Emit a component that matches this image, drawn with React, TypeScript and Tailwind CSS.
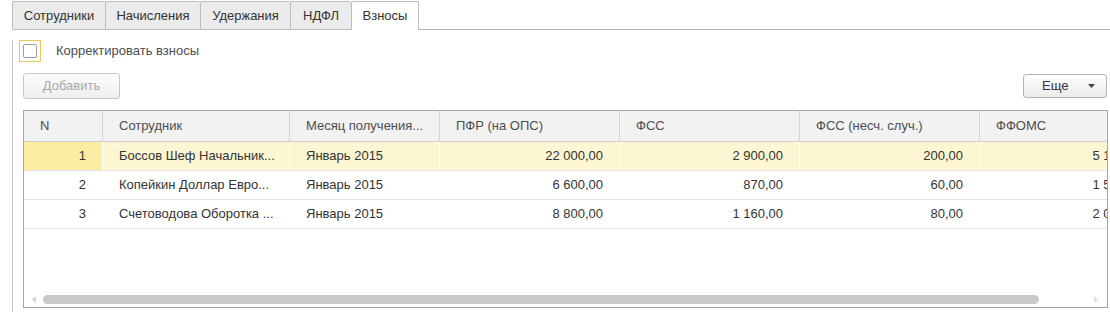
import React from "react";

const cols = [
  { w: 79, title: "N", align: "right" },
  { w: 187, title: "Сотрудник", align: "left" },
  { w: 150, title: "Месяц получения...", align: "left" },
  { w: 180, title: "ПФР (на ОПС)", align: "right" },
  { w: 180, title: "ФСС", align: "right" },
  { w: 180, title: "ФСС (несч. случ.)", align: "right" },
  { w: 180, title: "ФФОМС", align: "right" },
];

const rows = [
  ["1", "Боссов Шеф Начальник...", "Январь 2015", "22 000,00", "2 900,00", "200,00", "5 100,00"],
  ["2", "Копейкин Доллар Евро...", "Январь 2015", "6 600,00", "870,00", "60,00", "1 530,00"],
  ["3", "Счетоводова Оборотка ...", "Январь 2015", "8 800,00", "1 160,00", "80,00", "2 040,00"],
];

const tabs = [
  { t: "Сотрудники", w: 93 },
  { t: "Начисления", w: 95 },
  { t: "Удержания", w: 90 },
  { t: "НДФЛ", w: 61 },
];

export default function App() {
  return (
    <div
      className="w-[1110px] h-[312px] bg-white overflow-hidden text-[13px] text-[#333]"
      style={{ fontFamily: '"Liberation Sans", Arial, sans-serif' }}
    >
      {/* Tabs */}
      <div className="flex pt-[1px] pl-[12px] h-[30px]">
        {tabs.map((tab) => (
          <div
            key={tab.t}
            className="h-[29px] flex items-center justify-center bg-[#ebebeb] border-l border-t border-b border-[#bdbdbd] rounded-t-[2px] shrink-0"
            style={{ width: tab.w }}
          >
            {tab.t}
          </div>
        ))}
        <div className="h-[29px] w-[68px] flex items-center justify-center bg-white border-l border-r border-t border-[#bdbdbd] rounded-t-[2px] shrink-0">
          Взносы
        </div>
        <div className="flex-1 h-[29px] border-b border-[#b4b4b4]" />
      </div>

      {/* Panel */}
      <div className="ml-[12px] border-l border-[#c6c6c6] h-[282px]">
        {/* Checkbox row */}
        <div className="flex items-center mt-[10px] h-[22px]">
          <div className="ml-[6px] w-[22px] h-[22px] border border-[#f0c658] flex items-center justify-center">
            <div className="w-[14px] h-[14px] border border-[#9c9c9c] rounded-[2px] bg-white" />
          </div>
          <span className="ml-[15px] text-[#4d4d4d]">Корректировать взносы</span>
        </div>

        {/* Buttons */}
        <div className="ml-[10px] w-[1085px] mt-[11px] flex items-center justify-between h-[26px]">
          <div className="w-[97px] h-[26px] rounded-[3px] border border-[#c8c8c8] bg-gradient-to-b from-[#fdfdfd] to-[#eeeeee] flex items-center justify-center text-[#a8a8a8]">
            Добавить
          </div>
          <div className="mr-[1px] w-[84px] h-[24px] rounded-[3px] border border-[#b5b5b5] bg-gradient-to-b from-[#ffffff] to-[#ebebeb] flex items-center pl-[18px] pr-[11px] justify-between text-[#333]">
            <span>Еще</span>
            <svg width="7" height="4" viewBox="0 0 7 4">
              <path d="M0 0 L7 0 L3.5 4 Z" fill="#444" />
            </svg>
          </div>
        </div>

        {/* Table */}
        <div className="ml-[10px] mt-[11px] w-[1085px] h-[198px] border border-[#a6a6a6] overflow-hidden flex flex-col">
          {/* Header */}
          <div className="flex h-[31px] bg-[#f2f2f2] border-b border-[#cfcfcf] shrink-0">
            {cols.map((c, i) => (
              <div
                key={i}
                className="h-[30px] flex items-center px-[16px] border-r border-[#d2d2d2] text-[#4d4d4d] whitespace-nowrap shrink-0"
                style={{ width: c.w }}
              >
                {c.title}
              </div>
            ))}
          </div>
          {/* Rows */}
          {rows.map((r, ri) => (
            <div key={ri} className="flex h-[29px] border-b border-[#e4e4e4] shrink-0">
              {r.map((v, ci) => {
                const sel = ri === 0;
                const bg = sel ? (ci === 0 ? "bg-[#fbeea3]" : "bg-[#fdf6d2]") : "bg-white";
                return (
                  <div
                    key={ci}
                    className={`h-[28px] flex items-center px-[16px] border-r whitespace-nowrap shrink-0 ${
                      sel ? "border-white" : "border-transparent"
                    } ${bg} ${cols[ci].align === "right" ? "justify-end" : "justify-start"}`}
                    style={{ width: cols[ci].w }}
                  >
                    {v}
                  </div>
                );
              })}
            </div>
          ))}
          <div className="flex-1" />
          {/* Scrollbar */}
          <div className="h-[16px] flex items-center shrink-0 relative">
            <svg className="ml-[8px]" width="4" height="7" viewBox="0 0 4 7">
              <path d="M4 0 L4 7 L0 3.5 Z" fill="#d6d6d6" />
            </svg>
            <div className="ml-[7px] w-[996px] h-[9px] rounded-full bg-[#c9c9c9]" />
            <svg className="ml-[55px]" width="4" height="7" viewBox="0 0 4 7">
              <path d="M0 0 L0 7 L4 3.5 Z" fill="#e0e0e0" />
            </svg>
          </div>
        </div>
      </div>
    </div>
  );
}
